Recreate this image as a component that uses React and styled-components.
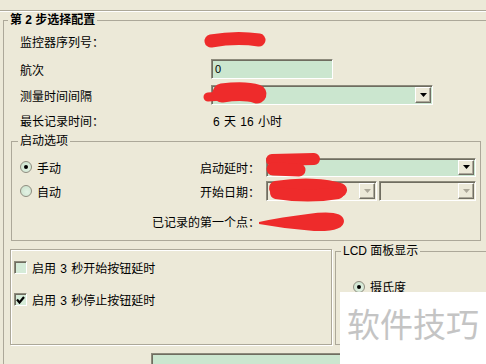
import React from "react";
import styled, { createGlobalStyle } from "styled-components";

const GlobalStyle = createGlobalStyle`
  html, body {
    margin: 0;
    padding: 0;
    background: #ece9d8;
  }
  body {
    font-family: "Liberation Sans", "Noto Sans CJK SC", sans-serif;
    font-size: 12px;
    color: #000;
  }
`;

const Page = styled.div`
  position: relative;
  width: 486px;
  height: 364px;
  overflow: hidden;
  background: #ece9d8;
`;

const Rule = styled.div`
  margin-top: 10px;
  border-top: 1px solid #aca899;
  border-bottom: 1px solid #fff;
`;

const Group = styled.fieldset`
  box-sizing: border-box;
  min-width: 0;
  padding: 0;
  border: 1px solid #aca899;
`;

const StepGroup = styled(Group)`
  margin: 2px -40px 0 3px;
`;

const StartGroup = styled(Group)`
  width: 470px;
  margin: 2px 0 0 7px;
  padding-bottom: 1px;
`;

const LcdGroup = styled(Group)`
  width: 170px;
  height: 100px;
  margin: -4px 0 0 3px;
`;

const Legend = styled.legend`
  margin-left: ${p => p.$offset}px;
  padding: 0 2px;
  line-height: 13px;
  font-weight: ${p => (p.$bold ? 700 : 400)};
`;

const InfoGrid = styled.div`
  display: grid;
  grid-template-columns: 191px 1fr;
  grid-template-rows: 28px 28px 24px 26px;
  align-items: center;
  padding-left: 16px;
`;

const Label = styled.span`
  white-space: nowrap;
`;

const Value = styled.span`
  padding-left: 2px;
  white-space: nowrap;
  word-spacing: 1px;
`;

const TextBox = styled.div`
  box-sizing: border-box;
  width: ${p => p.$width}px;
  height: 20px;
  padding: 0 3px;
  border: 1px solid;
  border-color: #8d8b7c #fff #fff #8d8b7c;
  box-shadow: inset 1px 1px 0 #6f6d60;
  background: #cbe6cf;
  font-size: 11px;
  line-height: 18px;
`;

const Combo = styled.div`
  box-sizing: border-box;
  display: flex;
  justify-content: flex-end;
  width: ${p => p.$width}px;
  height: ${p => p.$height}px;
  padding: 1px;
  border: 1px solid;
  border-color: #8d8b7c #fff #fff #8d8b7c;
  box-shadow: inset 1px 1px 0 #6f6d60;
  background: ${p => (p.$disabled ? "#ece9d8" : "#cbe6cf")};
`;

const DropButton = styled.span`
  box-sizing: border-box;
  display: flex;
  align-items: center;
  justify-content: center;
  width: 16px;
  height: 100%;
  background: #ece9d8;
  border: 1px solid;
  border-color: #fff #716f64 #716f64 #fff;
  box-shadow: inset -1px -1px 0 #aca899;
`;

const StartGrid = styled.div`
  display: grid;
  grid-template-columns: 130px 109px 217px;
  grid-template-rows: 24px 24px 36px;
  align-items: center;
  padding: 7px 0 0 8px;
`;

const FieldLabel = styled.span`
  margin-right: -1px;
  text-align: right;
  white-space: nowrap;
`;

const FieldSlot = styled.div`
  margin-left: 7px;
`;

const ComboPair = styled(FieldSlot)`
  display: flex;
  gap: 2px;
`;

const Choice = styled.label`
  display: flex;
  align-items: center;
  gap: 5px;
  white-space: nowrap;
`;

const RadioDot = styled.span`
  box-sizing: border-box;
  display: flex;
  align-items: center;
  justify-content: center;
  width: 12px;
  height: 12px;
  border-radius: 50%;
  border: 1px solid #8f8d80;
  background: radial-gradient(circle at 60% 60%, #e3f2e4, #c7e0c9);

  &::after {
    content: "";
    width: 4px;
    height: 4px;
    border-radius: 50%;
    background: ${p => (p.$checked ? "#000" : "transparent")};
  }
`;

const CheckBox = styled.span`
  box-sizing: border-box;
  display: flex;
  align-items: center;
  justify-content: center;
  width: 13px;
  height: 13px;
  border: 1px solid;
  border-color: #8d8b7c #fff #fff #8d8b7c;
  box-shadow: inset 1px 1px 0 #6f6d60;
  background: #d5ebd8;
`;

const CheckRow = styled.label`
  display: flex;
  align-items: center;
  gap: 5px;
  height: 13px;
  white-space: nowrap;
  word-spacing: 1px;
`;

const BottomRow = styled.div`
  display: flex;
  align-items: flex-start;
  margin: 8px 0 0 6px;
`;

const OptionPanel = styled.div`
  box-sizing: border-box;
  display: flex;
  flex-direction: column;
  gap: 19px;
  width: 322px;
  height: 96px;
  padding: 11px 0 0 3px;
  border: 1px solid #aca899;
  box-shadow: inset 1px 1px 0 #fff, 1px 1px 0 #fff;
`;

const LcdBody = styled.div`
  padding: 20px 0 0 17px;
`;

const StatusBox = styled.div`
  box-sizing: border-box;
  width: 300px;
  height: 20px;
  margin: 8px 0 0 147px;
  border: 1px solid;
  border-color: #8d8b7c #fff #fff #8d8b7c;
  box-shadow: inset 1px 1px 0 #6f6d60;
  background: #cbe6cf;
`;

const Scribbles = styled.svg`
  position: absolute;
  top: 0;
  left: 0;
  pointer-events: none;
`;

const Watermark = styled.div`
  position: absolute;
  right: 0;
  bottom: 0;
  width: 146px;
  height: 72px;
  background: #fff;
  color: #c4c4c4;
  font-family: "Noto Sans CJK SC", sans-serif;
  font-size: 33px;
  line-height: 62px;
  text-align: center;
`;

const Arrow = ({ muted }) => (
  <svg width="7" height="4" viewBox="0 0 7 4">
    <polygon points="0,0 7,0 3.5,4" fill={muted ? "#aca899" : "#000"} />
  </svg>
);

const Select = ({ width, height = 20, disabled }) => (
  <Combo $width={width} $height={height} $disabled={disabled}>
    <DropButton>
      <Arrow muted={disabled} />
    </DropButton>
  </Combo>
);

const Radio = ({ checked, children }) => (
  <Choice>
    <RadioDot $checked={checked} />
    {children}
  </Choice>
);

const Check = ({ checked, children }) => (
  <CheckRow>
    <CheckBox>
      {checked && (
        <svg width="9" height="8" viewBox="0 0 9 8">
          <polyline points="1,3.5 3.5,6.5 8,1" fill="none" stroke="#000" strokeWidth="2.2" />
        </svg>
      )}
    </CheckBox>
    {children}
  </CheckRow>
);

const RED = "#ee2b2b";

const App = () => (
  <Page>
    <GlobalStyle />
    <Rule />
    <StepGroup>
      <Legend $offset={4} $bold>第 2 步选择配置</Legend>
      <InfoGrid>
        <Label>监控器序列号：</Label>
        <span />
        <Label>航次</Label>
        <TextBox $width={122}>0</TextBox>
        <Label>测量时间间隔</Label>
        <Select width={222} />
        <Label>最长记录时间：</Label>
        <Value>6 天 16 小时</Value>
      </InfoGrid>

      <StartGroup>
        <Legend $offset={6}>启动选项</Legend>
        <StartGrid>
          <Radio checked>手动</Radio>
          <FieldLabel>启动延时：</FieldLabel>
          <FieldSlot>
            <Select width={210} height={19} />
          </FieldSlot>
          <Radio>自动</Radio>
          <FieldLabel>开始日期：</FieldLabel>
          <ComboPair>
            <Select width={111} disabled />
            <Select width={97} disabled />
          </ComboPair>
          <span />
          <FieldLabel>已记录的第一个点：</FieldLabel>
          <span />
        </StartGrid>
      </StartGroup>

      <BottomRow>
        <OptionPanel>
          <Check>启用 3 秒开始按钮延时</Check>
          <Check checked>启用 3 秒停止按钮延时</Check>
        </OptionPanel>
        <LcdGroup>
          <Legend $offset={5}>LCD 面板显示</Legend>
          <LcdBody>
            <Radio checked>摄氏度</Radio>
          </LcdBody>
        </LcdGroup>
      </BottomRow>

      <StatusBox />
    </StepGroup>

    <Scribbles width="486" height="364" viewBox="0 0 486 364">
      <g stroke={RED} strokeLinecap="round" fill="none">
        <path d="M211 41 C 228 38, 246 38, 259 40" strokeWidth="13" />
        <path d="M208 97 L 222 96" strokeWidth="9" />
        <path d="M222 93 C 236 91, 248 91, 257 94" strokeWidth="19" />
        <path d="M272 160 L 314 159" strokeWidth="12" />
        <path d="M273 169 L 299 170" strokeWidth="13" />
        <path d="M276 188 C 300 184, 326 185, 340 190" strokeWidth="14" />
        <path d="M276 193 C 296 196, 320 196, 338 193" strokeWidth="12" />
      </g>
      <path
        d="M259 222 Q 282 217 308 214 Q 343 209 344 221 Q 344 232 314 231 Q 286 229 259 224 Z"
        fill={RED}
      />
    </Scribbles>

    <Watermark>软件技巧</Watermark>
  </Page>
);

export default App;
